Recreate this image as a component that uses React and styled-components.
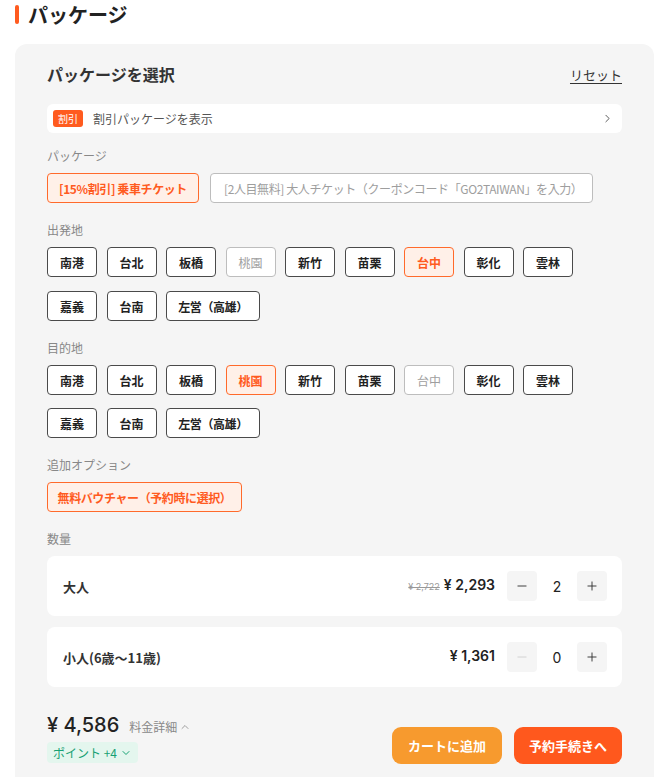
import React from 'react'
import styled, { createGlobalStyle } from 'styled-components'
import { ChevronRight, ChevronUp, ChevronDown, Minus, Plus } from 'lucide-react'

const Global = createGlobalStyle`
  * { box-sizing: border-box; }
  body {
    margin: 0;
    background: #fff;
    font-family: "Noto Sans CJK JP", "Noto Sans", Roboto, sans-serif;
    color: #333;
  }
`

const Page = styled.div`
  padding: 0 4px 0 15px;
  height: 777px;
  overflow: hidden;
`

const Title = styled.h2`
  display: flex;
  align-items: center;
  gap: 9px;
  margin: 0;
  height: 28px;
  font-size: 20px;
  font-weight: 700;
  color: #222;
  &::before {
    content: '';
    width: 4px;
    height: 19px;
    border-radius: 2px;
    background: #ff5b1f;
  }
`

const Panel = styled.div`
  margin-top: 16px;
  background: #f5f5f5;
  border-radius: 12px;
  padding: 18px 32px 40px;
`

const Header = styled.div`
  display: flex;
  align-items: center;
  justify-content: space-between;
  height: 24px;
`

const PanelTitle = styled.div`
  font-size: 16px;
  font-weight: 700;
  color: #333;
`

const Reset = styled.a`
  font-size: 13px;
  color: #333;
  text-decoration: underline;
  text-underline-offset: 3px;
`

const DiscountRow = styled.div`
  margin-top: 18px;
  height: 29px;
  background: #fff;
  border-radius: 6px;
  display: flex;
  align-items: center;
  padding: 0 8px 0 6px;
  gap: 10px;
  font-size: 12px;
  color: #555;
  span.text { flex: 1; }
`

const Badge = styled.span`
  background: #ff5b1f;
  color: #fff;
  font-size: 10px;
  border-radius: 3px;
  padding: 0 5px;
  height: 17px;
  line-height: 17px;
`

const Label = styled.div`
  margin-top: ${p => p.$first ? 14 : 18}px;
  margin-bottom: 8px;
  font-size: 12px;
  line-height: 18px;
  color: #888;
`

const ChipGrid = styled.div`
  display: flex;
  flex-wrap: wrap;
  column-gap: 9.5px;
  row-gap: ${p => p.$rowGap || 14}px;
`

const Chip = styled.button`
  font-family: inherit;
  height: 30px;
  width: ${p => p.$width ? p.$width + 'px' : '50px'};
  padding: 0 ${p => p.$pad || 0}px;
  border-radius: 4px;
  font-size: 12px;
  font-weight: ${p => p.$muted ? 400 : 700};
  letter-spacing: ${p => p.$tight ? '-0.4px' : '0'};
  white-space: nowrap;
  overflow: hidden;
  border: 1px solid ${p => p.$active ? '#ff6a2b' : p.$muted ? '#bdbdbd' : '#4a4a4a'};
  background: ${p => p.$active ? '#fff0e8' : '#fff'};
  color: ${p => p.$active ? '#ff5b1f' : p.$muted ? '#9e9e9e' : '#222'};
  text-align: ${p => p.$left ? 'left' : 'center'};
`

const QtyList = styled.div`
  display: flex;
  flex-direction: column;
  gap: 11px;
`

const QtyCard = styled.div`
  height: 60px;
  background: #fff;
  border-radius: 8px;
  display: flex;
  align-items: center;
  padding: 0 15px 0 16px;
`

const QtyName = styled.div`
  flex: 1;
  font-size: 13px;
  font-weight: 700;
  color: #333;
`

const Prices = styled.div`
  display: flex;
  align-items: baseline;
  gap: 4px;
  margin-right: 12px;
  margin-top: -4px;
  font-family: Inter, "Noto Sans CJK JP", sans-serif;
`

const OldPrice = styled.span`
  font-size: 9px;
  color: #999;
  text-decoration: line-through;
`

const Price = styled.span`
  font-size: 14px;
  font-weight: 600;
  color: #222;
`

const StepBtn = styled.button`
  width: 30px;
  height: 30px;
  border: none;
  border-radius: 4px;
  background: #f5f5f5;
  display: flex;
  align-items: center;
  justify-content: center;
  color: ${p => p.$disabled ? '#cfcfcf' : '#333'};
  padding: 0;
`

const Count = styled.span`
  width: 40px;
  text-align: center;
  font-size: 14px;
  color: #222;
  font-family: Inter, sans-serif;
`

const Footer = styled.div`
  margin-top: 26px;
  display: flex;
  align-items: flex-end;
  justify-content: space-between;
`

const Total = styled.div`
  display: flex;
  flex-direction: column;
  align-items: flex-start;
  gap: 3px;
`

const TotalLine = styled.div`
  display: flex;
  align-items: baseline;
  gap: 10px;
  height: 26px;
`

const TotalPrice = styled.span`
  font-family: Inter, "Noto Sans CJK JP", sans-serif;
  font-size: 20px;
  font-weight: 500;
  color: #222;
`

const Detail = styled.span`
  font-size: 12px;
  color: #888;
  display: inline-flex;
  align-items: center;
  gap: 2px;
`

const Points = styled.span`
  background: #e4f6ee;
  color: #17a173;
  font-size: 12px;
  border-radius: 4px;
  height: 21px;
  padding: 0 6px;
  display: inline-flex;
  align-items: center;
  gap: 3px;
`

const Actions = styled.div`
  display: flex;
  gap: 12px;
  margin-bottom: -1px;
`

const ActionBtn = styled.button`
  font-family: inherit;
  height: 37px;
  width: ${p => p.$w}px;
  border: none;
  border-radius: 9px;
  background: ${p => p.$primary ? '#ff581d' : '#f79a2e'};
  color: #fff;
  font-size: 13px;
  font-weight: 700;
`

const stations = ['南港', '台北', '板橋', '桃園', '新竹', '苗栗', '台中', '彰化', '雲林', '嘉義', '台南', '左営（高雄）']

const StationChips = ({ active, muted, rowGap }) => (
  <ChipGrid $rowGap={rowGap}>
    {stations.map(s => (
      <Chip key={s} $active={s === active} $muted={s === muted} $width={s.length > 2 ? 94 : 50} $tight={s.length > 2}>{s}</Chip>
    ))}
  </ChipGrid>
)

export default function App() {
  return (
    <Page>
      <Global />
      <Title>パッケージ</Title>
      <Panel>
        <Header>
          <PanelTitle>パッケージを選択</PanelTitle>
          <Reset>リセット</Reset>
        </Header>
        <DiscountRow>
          <Badge>割引</Badge>
          <span className="text">割引パッケージを表示</span>
          <ChevronRight size={13} strokeWidth={1.6} color="#444" />
        </DiscountRow>

        <Label $first>パッケージ</Label>
        <ChipGrid style={{ columnGap: 11 }}>
          <Chip $active $width={152} $tight>[15%割引] 乗車チケット</Chip>
          <Chip $muted $left $pad={13} $width={383} $tight>[2人目無料] 大人チケット（クーポンコード「GO2TAIWAN」を入力）</Chip>
        </ChipGrid>

        <Label>出発地</Label>
        <StationChips active="台中" muted="桃園" rowGap={14} />

        <Label>目的地</Label>
        <StationChips active="桃園" muted="台中" rowGap={13} />

        <Label>追加オプション</Label>
        <ChipGrid>
          <Chip $active $width={195} $tight>無料バウチャー（予約時に選択）</Chip>
        </ChipGrid>

        <Label>数量</Label>
        <QtyList>
          <QtyCard>
            <QtyName>大人</QtyName>
            <Prices>
              <OldPrice>¥ 2,722</OldPrice>
              <Price>¥ 2,293</Price>
            </Prices>
            <StepBtn><Minus size={14} strokeWidth={1.6} /></StepBtn>
            <Count>2</Count>
            <StepBtn><Plus size={14} strokeWidth={1.6} /></StepBtn>
          </QtyCard>
          <QtyCard>
            <QtyName>小人(6歳〜11歳)</QtyName>
            <Prices>
              <Price>¥ 1,361</Price>
            </Prices>
            <StepBtn $disabled><Minus size={14} strokeWidth={1.6} /></StepBtn>
            <Count>0</Count>
            <StepBtn><Plus size={14} strokeWidth={1.6} /></StepBtn>
          </QtyCard>
        </QtyList>

        <Footer>
          <Total>
            <TotalLine>
              <TotalPrice>¥ 4,586</TotalPrice>
              <Detail>料金詳細 <ChevronUp size={12} strokeWidth={1.6} /></Detail>
            </TotalLine>
            <Points>ポイント +4 <ChevronDown size={12} strokeWidth={2} /></Points>
          </Total>
          <Actions>
            <ActionBtn $w={110}>カートに追加</ActionBtn>
            <ActionBtn $w={108} $primary>予約手続きへ</ActionBtn>
          </Actions>
        </Footer>
      </Panel>
    </Page>
  )
}
